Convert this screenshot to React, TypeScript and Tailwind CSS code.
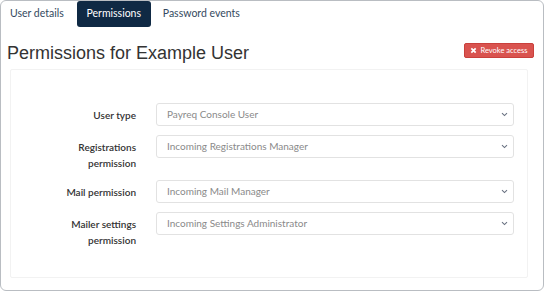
import React from "react";

const rows = [
  { label: ["User type"], value: "Payreq Console User" },
  { label: ["Registrations", "permission"], value: "Incoming Registrations Manager" },
  { label: ["Mail permission"], value: "Incoming Mail Manager" },
  { label: ["Mailer settings", "permission"], value: "Incoming Settings Administrator" },
];

function Chevron() {
  return (
    <svg width="7" height="5" viewBox="0 0 7 5" className="text-gray-500">
      <path d="M1 1.2 L3.5 3.6 L6 1.2" fill="none" stroke="currentColor" strokeWidth="1.1" />
    </svg>
  );
}

export default function App() {
  return (
    <div className="w-[546px] h-[292px] bg-white font-['Lato',sans-serif]">
      <div className="w-[544px] h-[291px] border border-[#b9bdc2] rounded-[6px] flex flex-col">
        {/* Tabs */}
        <div className="flex items-stretch h-[26px] text-[10.5px]">
          <div className="pl-[9px] pr-[13px] flex items-center text-[#34495e]">User details</div>
          <div className="w-[74px] flex items-center justify-center bg-[#0f2944] text-white rounded-[3px]">
            Permissions
          </div>
          <div className="pl-[12px] flex items-center text-[#34495e]">Password events</div>
        </div>

        {/* Heading */}
        <div className="flex items-start justify-between mt-[16px] pl-[6px] pr-[9px]">
          <h1 className="text-[18px] leading-[20px] text-[#333] font-['Liberation_Sans',Arial,sans-serif]">
            Permissions for Example User
          </h1>
          <button className="h-[15px] w-[70px] flex items-center justify-center gap-[3px] bg-[#d9534f] border border-[#c9403c] rounded-[2px] text-white text-[7.5px]">
            <svg width="7" height="7" viewBox="0 0 8 8">
              <path d="M1.5 1.5 L6.5 6.5 M6.5 1.5 L1.5 6.5" stroke="white" strokeWidth="2" />
            </svg>
            Revoke access
          </button>
        </div>

        {/* Panel */}
        <div className="mt-[6px] ml-[9px] w-[518px] h-[209px] border border-[#f2f2f2] rounded-[2px] pt-[33px] flex flex-col gap-[9px]">
          {rows.map((r) => (
            <div key={r.value} className="flex items-start">
              <div className="w-[125px] pt-[4px] text-right text-[10px] leading-[16px] font-semibold text-[#333]">
                {r.label.map((l) => (
                  <div key={l}>{l}</div>
                ))}
              </div>
              <div className="ml-[20px] w-[358px] h-[23px] border border-[#e2e2e2] rounded-[3px] flex items-center justify-between pl-[10px] pr-[5px] text-[10px] text-[#8a8a8a]">
                <span>{r.value}</span>
                <Chevron />
              </div>
            </div>
          ))}
        </div>
      </div>
    </div>
  );
}
